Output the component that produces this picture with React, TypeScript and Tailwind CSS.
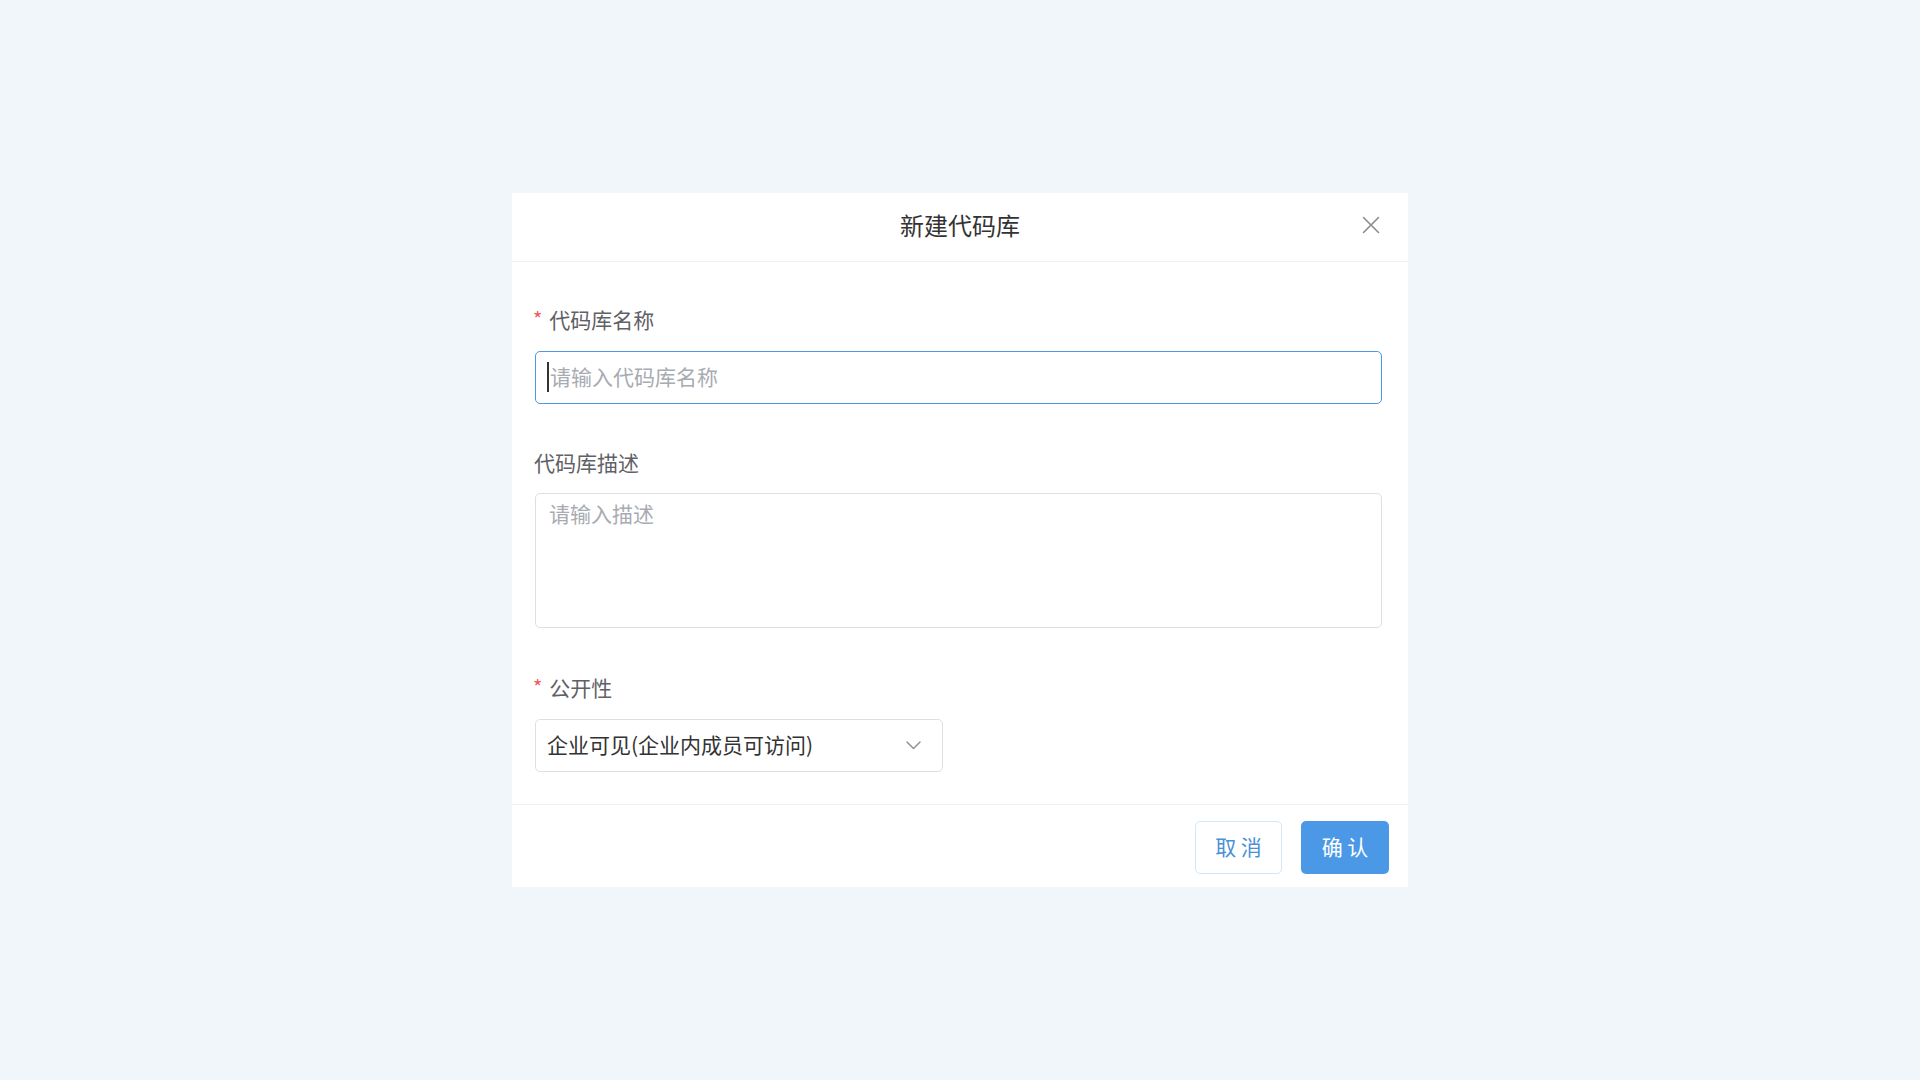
import React from "react";

const font = { fontFamily: '"Noto Sans CJK SC", "Noto Sans", sans-serif' };

export default function App() {
  return (
    <div
      className="w-full h-screen bg-[#f1f6fb] flex items-center justify-center"
      style={font}
    >
      <div className="w-[896px] bg-white flex flex-col">
        <div className="relative h-[69px] border-b border-[#eef0f4] flex items-center justify-center pb-[5px]">
          <span className="text-[24px] leading-[32px] text-[#333333]">新建代码库</span>
          <button className="absolute right-[28px] top-[23px] w-[18px] h-[18px] flex items-center justify-center">
            <svg width="18" height="18" viewBox="0 0 18 18" fill="none">
              <path d="M1.5 1.5 L16.5 16.5 M16.5 1.5 L1.5 16.5" stroke="#8c8c8c" strokeWidth="1.6" strokeLinecap="round" />
            </svg>
          </button>
        </div>

        <div className="pl-[23px] pr-[26px] pt-[44px] pb-[32px] flex flex-col">
          <div className="h-[32px] pb-[6px] flex items-center text-[21px] leading-[32px] text-[#5f6166]">
            <span className="text-[#ef5b5b] -ml-[2px] mr-[7px] text-[20px]">*</span>
            <span>代码库名称</span>
          </div>
          <div className="mt-[13px] h-[53px] rounded-[5px] border-[1.5px] border-[#4d97e3] flex items-center pl-[11px] pb-[2px]">
            <span className="w-[2px] h-[30px] bg-[#333333] mr-[1px]" />
            <span className="text-[21px] text-[#a8abb2]">请输入代码库名称</span>
          </div>

          <div className="mt-[45px] h-[32px] pb-[6px] flex items-center text-[21px] leading-[32px] text-[#5f6166] -ml-[1px]">
            代码库描述
          </div>
          <div className="mt-[12px] h-[135px] rounded-[5px] border border-[#dcdfe6] pl-[13px] pt-[3px]">
            <span className="text-[21px] leading-[32px] text-[#a8abb2]">请输入描述</span>
          </div>

          <div className="mt-[46px] h-[32px] pb-[6px] flex items-center text-[21px] leading-[32px] text-[#5f6166]">
            <span className="text-[#ef5b5b] -ml-[2px] mr-[7px] text-[20px]">*</span>
            <span>公开性</span>
          </div>
          <div className="mt-[13px] h-[53px] w-[408px] rounded-[5px] border border-[#dcdfe6] flex items-center pl-[11px] pr-[21px] justify-between">
            <span className="text-[21px] text-[#333333] pb-[2px]">企业可见(企业内成员可访问)</span>
            <svg width="15" height="9" viewBox="0 0 15 9" fill="none">
              <path d="M1 1 L7.5 7.5 L14 1" stroke="#8f9399" strokeWidth="1.5" strokeLinecap="round" strokeLinejoin="round" />
            </svg>
          </div>
        </div>

        <div className="border-t border-[#eef0f4] pt-[16px] pb-[13px] pr-[19px] flex justify-end gap-[19px]">
          <button className="w-[87px] h-[53px] pb-[2px] rounded-[5px] border border-[#d4e6f8] bg-white text-[21px] text-[#4a90d9]">
            取 消
          </button>
          <button className="w-[88px] h-[53px] pb-[2px] rounded-[5px] bg-[#4b99e6] text-[21px] text-white">
            确 认
          </button>
        </div>
      </div>
    </div>
  );
}
